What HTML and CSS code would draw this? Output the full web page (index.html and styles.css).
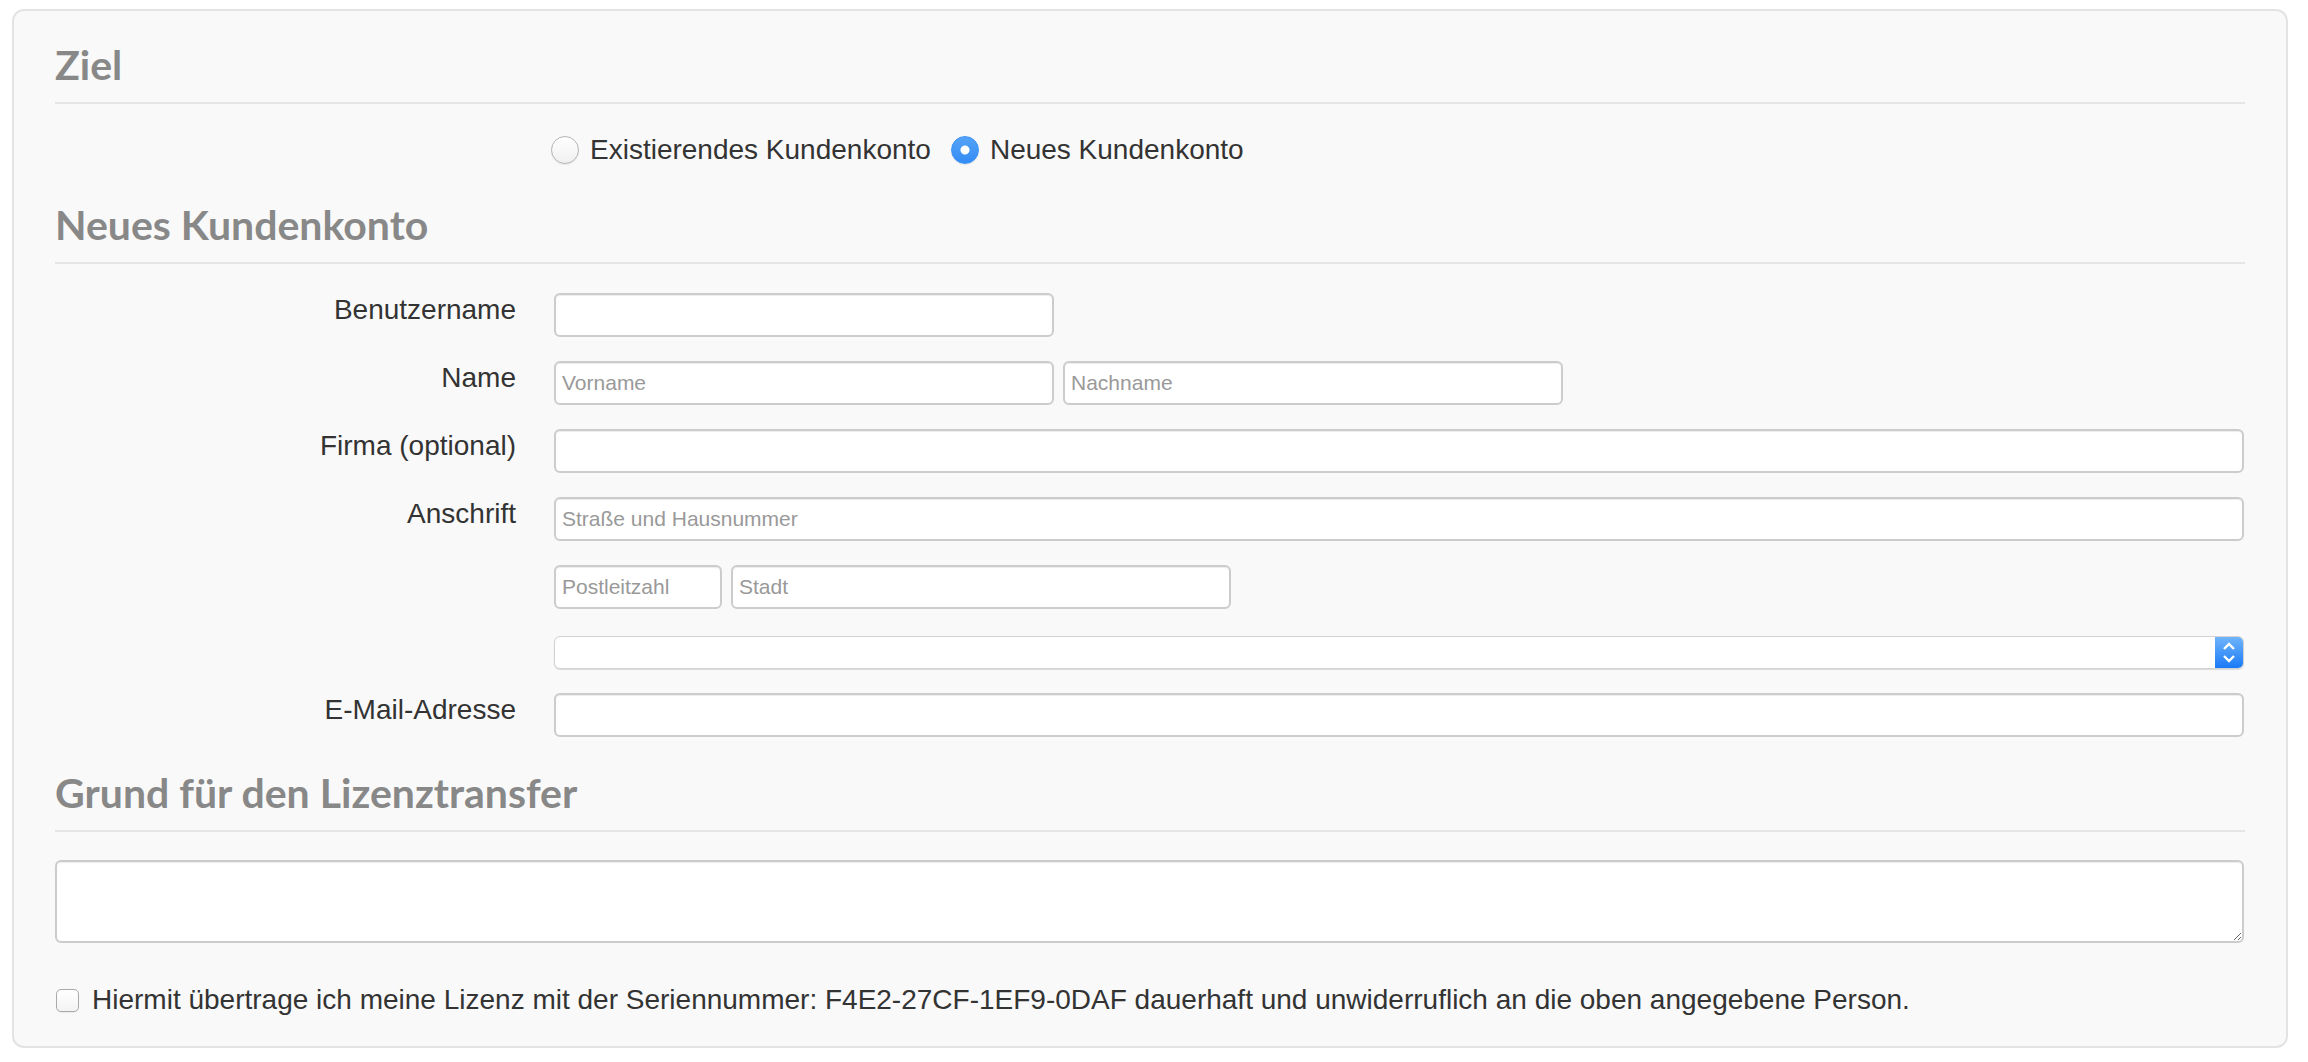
FILE: index.html
```html
<!DOCTYPE html>
<html lang="de">
<head>
    <meta charset="UTF-8">
    <title>Lizenztransfer</title>
    <link rel="stylesheet" href="styles.css">
</head>
<body>
<form class="well">
    <h3 class="legend">Ziel</h3>
    <div class="row radios">
        <span class="lbl"></span>
        <div class="ctrls">
            <label class="opt"><input type="radio" name="ziel"> Existierendes Kundenkonto</label>
            <label class="opt"><input type="radio" name="ziel" checked> Neues Kundenkonto</label>
        </div>
    </div>

    <h3 class="legend legend2">Neues Kundenkonto</h3>
    <div class="fields">
        <div class="row">
            <label class="lbl">Benutzername</label>
            <div class="ctrls"><input type="text" class="half"></div>
        </div>
        <div class="row">
            <label class="lbl">Name</label>
            <div class="ctrls">
                <input type="text" class="half" placeholder="Vorname">
                <input type="text" class="half" placeholder="Nachname">
            </div>
        </div>
        <div class="row">
            <label class="lbl">Firma (optional)</label>
            <div class="ctrls"><input type="text" class="full"></div>
        </div>
        <div class="row">
            <label class="lbl">Anschrift</label>
            <div class="ctrls"><input type="text" class="full" placeholder="Straße und Hausnummer"></div>
        </div>
        <div class="row">
            <span class="lbl"></span>
            <div class="ctrls">
                <input type="text" class="zip" placeholder="Postleitzahl">
                <input type="text" class="half" placeholder="Stadt">
            </div>
        </div>
        <div class="row row-select">
            <span class="lbl"></span>
            <div class="ctrls">
                <div class="select">
                    <select><option></option></select>
                    <span class="stepper">
                        <svg width="28" height="33" viewBox="0 0 28 33">
                            <polyline points="9,13 14,8 19,13" fill="none" stroke="#fff" stroke-width="2.4"/>
                            <polyline points="9,20 14,25 19,20" fill="none" stroke="#fff" stroke-width="2.4"/>
                        </svg>
                    </span>
                </div>
            </div>
        </div>
        <div class="row last">
            <label class="lbl">E-Mail-Adresse</label>
            <div class="ctrls"><input type="text" class="full"></div>
        </div>
    </div>

    <h3 class="legend legend3">Grund für den Lizenztransfer</h3>
    <textarea class="reason"></textarea>

    <label class="confirm"><input type="checkbox"> Hiermit übertrage ich meine Lizenz mit der Seriennummer: F4E2-27CF-1EF9-0DAF dauerhaft und unwiderruflich an die oben angegebene Person.</label>
</form>
</body>
</html>
```

FILE: styles.css
```css
body{
    margin:0;
    background:#fff;
    font-family:"Liberation Sans", Arial, sans-serif;
    color:#333;
}
.well{
    margin:9px 0 0 12px;
    width:2276px;
    box-sizing:border-box;
    padding:29px 41px;
    background:#f9f9f9;
    border:2px solid #e3e3e3;
    border-radius:12px;
}
.legend{
    margin:0;
    padding-bottom:13px;
    border-bottom:2px solid #e5e5e5;
    font-family:Lato, "Open Sans", sans-serif;
    font-weight:700;
    font-size:41px;
    line-height:49px;
    color:#888;
}
.legend2{
    margin-top:30px;
}
.legend3{
    margin-top:31px;
}

/* rows */
.row{
    display:flex;
    gap:38px;
    margin-bottom:24px;
}
.row.last{
    margin-bottom:0;
}
.lbl{
    flex:0 0 461px;
    text-align:right;
    font-size:28px;
    line-height:34px;
}
.ctrls{
    flex:1;
    display:flex;
    gap:9px;
}
.fields{
    margin-top:29px;
}

/* radio */
.radios{
    margin:26px 0 0;
}
.radios .ctrls{
    gap:20px;
    margin-left:-3px;
}
.opt{
    display:flex;
    align-items:center;
    gap:11px;
    font-size:28px;
    line-height:40px;
}
.opt input{
    appearance:none;
    -webkit-appearance:none;
    margin:0;
    width:28px;
    height:28px;
    border-radius:50%;
    border:1px solid #b4b4b4;
    background:linear-gradient(#fff, #f0f0f0);
    box-shadow:0 1px 1px rgba(0,0,0,.08);
}
.opt input:checked{
    border-color:#3b92f5;
    background:radial-gradient(circle, #fff 0 4px, transparent 5px), linear-gradient(#55a3f8, #348cf4);
}

/* text inputs */
input[type=text], textarea{
    box-sizing:border-box;
    height:44px;
    margin:0;
    padding:0 6px;
    border:2px solid #ccc;
    border-radius:6px;
    background:#fff;
    box-shadow:inset 0 1px 1px rgba(0,0,0,.075);
    font-family:"Liberation Sans", Arial, sans-serif;
    font-size:21px;
    color:#555;
    outline:none;
}
::placeholder{
    color:#999;
}
.half{
    width:500px;
}
.zip{
    width:168px;
}
.full{
    width:1690px;
}

/* select */
.row-select{
    padding-top:3px;
}
.select{
    display:flex;
    width:1690px;
    height:33px;
    box-sizing:border-box;
    border:1px solid #d2d2d2;
    border-radius:6px;
    background:#fff;
    overflow:hidden;
    box-shadow:0 1px 1px rgba(0,0,0,.12);
}
.select select{
    flex:1;
    appearance:none;
    -webkit-appearance:none;
    border:none;
    background:transparent;
    outline:none;
}
.stepper{
    width:28px;
    height:100%;
    display:flex;
    justify-content:center;
    align-items:center;
    background:linear-gradient(#6fb4fb, #1a7af6);
}
.stepper svg{
    display:block;
}

/* textarea */
textarea.reason{
    display:block;
    margin-top:28px;
    width:2189px;
    height:83px;
    padding:8px;
    resize:both;
}

/* checkbox */
.confirm{
    display:flex;
    align-items:center;
    gap:13px;
    margin-top:40px;
    font-size:28px;
    line-height:34px;
}
.confirm input{
    appearance:none;
    -webkit-appearance:none;
    margin:0 0 0 1px;
    width:23px;
    height:23px;
    border:1px solid #aaa;
    border-radius:5px;
    background:linear-gradient(#fff, #f3f3f3);
    box-shadow:0 1px 1px rgba(0,0,0,.06);
}
```
